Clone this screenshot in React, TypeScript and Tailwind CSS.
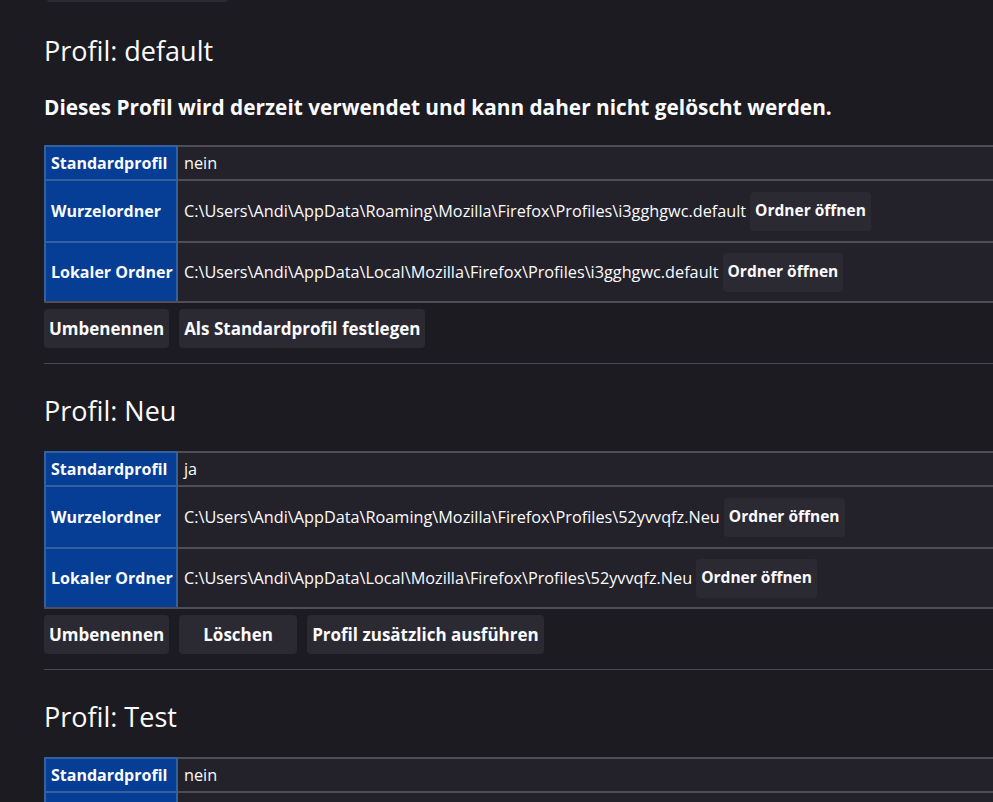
import React from "react";

type Profile = {
  name: string;
  note?: string;
  isDefault: boolean;
  root: string;
  local: string;
  actions: string[];
};

const profiles: Profile[] = [
  {
    name: "default",
    note: "Dieses Profil wird derzeit verwendet und kann daher nicht gelöscht werden.",
    isDefault: false,
    root: "C:\\Users\\Andi\\AppData\\Roaming\\Mozilla\\Firefox\\Profiles\\i3gghgwc.default",
    local: "C:\\Users\\Andi\\AppData\\Local\\Mozilla\\Firefox\\Profiles\\i3gghgwc.default",
    actions: ["Umbenennen", "Als Standardprofil festlegen"],
  },
  {
    name: "Neu",
    isDefault: true,
    root: "C:\\Users\\Andi\\AppData\\Roaming\\Mozilla\\Firefox\\Profiles\\52yvvqfz.Neu",
    local: "C:\\Users\\Andi\\AppData\\Local\\Mozilla\\Firefox\\Profiles\\52yvvqfz.Neu",
    actions: ["Umbenennen", "Löschen", "Profil zusätzlich ausführen"],
  },
  {
    name: "Test",
    isDefault: false,
    root: "C:\\Users\\Andi\\AppData\\Roaming\\Mozilla\\Firefox\\Profiles\\x1test00.Test",
    local: "C:\\Users\\Andi\\AppData\\Local\\Mozilla\\Firefox\\Profiles\\x1test00.Test",
    actions: ["Umbenennen", "Löschen", "Profil zusätzlich ausführen"],
  },
];

function Row({
  label,
  height,
  last,
  children,
}: {
  label: string;
  height: string;
  last?: boolean;
  children: React.ReactNode;
}) {
  return (
    <div className={`flex ${last ? "border-b-2 border-[#4f4e57]" : ""}`}>
      <div
        className={`w-[134px] shrink-0 flex items-center pl-[5px] bg-[#053e94] border-t-2 border-x-2 border-[#33609f] text-[16px] font-bold ${height}`}
      >
        {label}
      </div>
      <div
        className={`flex-1 flex items-center pl-[6px] bg-[#23222b] border-t-2 border-[#4f4e57] text-[16.25px] ${height}`}
      >
        {children}
      </div>
    </div>
  );
}

function FolderButton() {
  return (
    <button className="ml-[4px] h-[39px] px-[5px] rounded-[4px] bg-[#2b2a33] text-[15.5px] font-bold text-[#fbfbfe]">
      Ordner öffnen
    </button>
  );
}

function ProfileSection({ profile }: { profile: Profile }) {
  return (
    <section>
      <h2 className="h-[36px] text-[27px] leading-[39px] font-medium">
        Profil: {profile.name}
      </h2>
      {profile.note && (
        <p className="mt-[26px] h-[28px] text-[20.8px] leading-[28px] font-bold">
          {profile.note}
        </p>
      )}
      <div className="w-[1100px] mt-[24px]">
        <Row label="Standardprofil" height="h-[34px]">
          {profile.isDefault ? "ja" : "nein"}
        </Row>
        <Row label="Wurzelordner" height="h-[62px]">
          <span>{profile.root}</span>
          <FolderButton />
        </Row>
        <Row label="Lokaler Ordner" height="h-[60px]" last>
          <span>{profile.local}</span>
          <FolderButton />
        </Row>
      </div>
      <div className="mt-[6px] flex gap-[10px]">
        {profile.actions.map((a) => (
          <button
            key={a}
            className={`h-[39px] px-[5px] rounded-[4px] bg-[#2b2a33] text-[17px] font-bold text-[#fbfbfe] ${
              a === "Löschen" ? "w-[118px]" : ""
            }`}
          >
            {a}
          </button>
        ))}
      </div>
      <hr className="mt-[15px] mb-[27px] border-0 h-px bg-[#4a4951]" />
    </section>
  );
}

export default function App() {
  return (
    <div className="h-screen overflow-hidden bg-[#1c1b22] pl-[44px] text-[#fbfbfe] font-['Open_Sans',sans-serif]">
      <div className="ml-[3px] w-[181px] h-[2px] rounded-b-[4px] bg-[#2b2a33]" />
      <div className="mt-[29px]">
        {profiles.map((p) => (
          <ProfileSection key={p.name} profile={p} />
        ))}
      </div>
    </div>
  );
}
